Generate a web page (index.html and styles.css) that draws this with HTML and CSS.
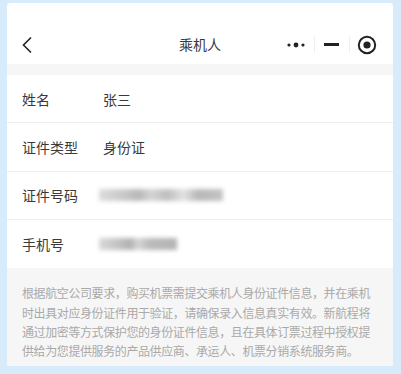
FILE: index.html
```html
<!DOCTYPE html>
<html lang="zh">
<head>
<meta charset="utf-8">
<link rel="stylesheet" href="styles.css">
</head>
<body>
<div class="panel">
  <header class="nav">
    <svg class="back" width="12" height="18" viewBox="0 0 12 18"><path d="M10 1.5 L2.5 9 L10 16.5" fill="none" stroke="#222" stroke-width="1.6"/></svg>
    <div class="title">乘机人</div>
    <div class="capsule">
      <svg class="more" width="20" height="8" viewBox="0 0 20 8"><circle cx="3" cy="4" r="1.6" fill="#222"/><circle cx="10" cy="4" r="2.4" fill="#222"/><circle cx="17" cy="4" r="1.6" fill="#222"/></svg>
      <span class="sep"></span>
      <span class="minus"></span>
      <span class="sep"></span>
      <svg class="target" width="20" height="20" viewBox="0 0 20 20"><circle cx="10" cy="10" r="8.2" fill="none" stroke="#222" stroke-width="2"/><circle cx="10" cy="10" r="3.6" fill="#222"/></svg>
    </div>
  </header>
  <div class="band"></div>
  <div class="list">
    <div class="row"><span class="label">姓名</span><span class="value">张三</span></div>
    <div class="row"><span class="label">证件类型</span><span class="value">身份证</span></div>
    <div class="row"><span class="label">证件号码</span><span class="blur blur-id"></span></div>
    <div class="row last"><span class="label">手机号</span><span class="blur blur-phone"></span></div>
  </div>
  <p class="note">根据航空公司要求，购买机票需提交乘机人身份证件信息，并在乘机时出具对应身份证件用于验证，请确保录入信息真实有效。新航程将通过加密等方式保护您的身份证件信息，且在具体订票过程中授权提供给为您提供服务的产品供应商、承运人、机票分销系统服务商。</p>
</div>
</body>
</html>
```

FILE: styles.css
```css
html, body {
  margin: 0;
  padding: 0;
}
body {
  background: #d7ebfb;
  width: 401px;
  height: 374px;
  overflow: hidden;
  font-family: "Noto Sans CJK SC", "Noto Sans", sans-serif;
}
.panel {
  margin: 3px 0 0 7px;
  width: 386px;
  height: 363px;
  background: #f6f6f6;
  border-radius: 4px 4px 0 0;
  overflow: hidden;
}
.nav {
  height: 61px;
  box-sizing: border-box;
  padding-top: 22px;
  background: #fff;
  display: flex;
  align-items: center;
  position: relative;
}
.back {
  margin-left: 14px;
}
.title {
  position: absolute;
  left: 0;
  right: 0;
  text-align: center;
  font-size: 14px;
  color: #3a3a3a;
  top: 32px;
  line-height: 18px;
  pointer-events: none;
}
.capsule {
  margin-left: auto;
  margin-right: 16px;
  display: flex;
  align-items: center;
}
.more {
  margin-right: 8px;
}
.sep {
  width: 1px;
  height: 17px;
  background: #efefef;
}
.minus {
  width: 15px;
  height: 3px;
  background: #222;
  margin: 0 10px 0 9px;
}
.target {
  margin-left: 7px;
}
.band {
  height: 11px;
  background: #f6f6f6;
}
.list {
  background: #fff;
}
.row {
  height: 48.3px;
  box-sizing: border-box;
  border-bottom: 1px solid #eeeeee;
  display: flex;
  align-items: center;
  padding-left: 15px;
  font-size: 14px;
  color: #3a3a3a;
}
.row.last {
  border-bottom: none;
}
.label {
  width: 81px;
}
.blur {
  display: block;
  height: 12px;
  filter: blur(2px);
  margin-left: -4px;
}
.blur-id {
  width: 124px;
  background: linear-gradient(90deg, #dcdcdc 0%, #c8c8c8 20%, #b8b8b8 32%, #d4d4d4 42%, #bebebe 55%, #e2e2e2 68%, #b8b8b8 80%, #c4c4c4 100%);
}
.blur-phone {
  width: 78px;
  background: linear-gradient(90deg, #d8d8d8 0%, #c2c2c2 25%, #b0b0b0 40%, #d6d6d6 50%, #bababa 65%, #b4b4b4 100%);
}
.note {
  margin: 0;
  padding: 15px 12px 0 15px;
  font-size: 12px;
  letter-spacing: -0.4px;
  line-height: 19.4px;
  color: #a9a9a9;
}
```
